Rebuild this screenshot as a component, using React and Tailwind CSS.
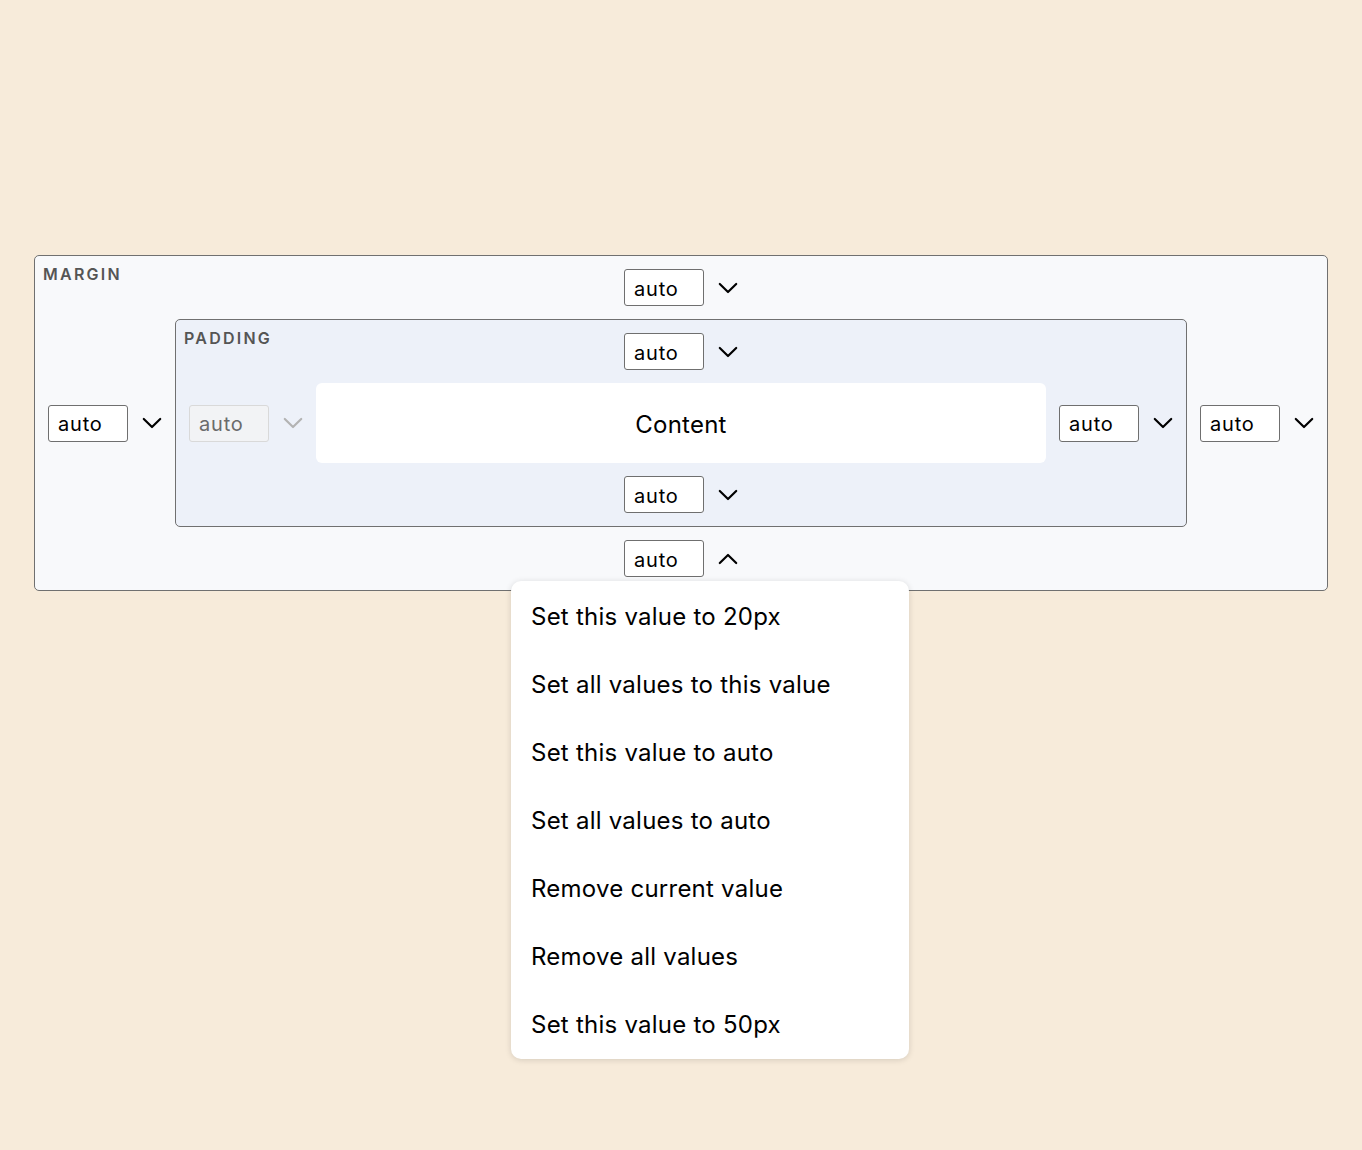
import React from 'react';

const menuItems = [
  'Set this value to 20px',
  'Set all values to this value',
  'Set this value to auto',
  'Set all values to auto',
  'Remove current value',
  'Remove all values',
  'Set this value to 50px',
];

function Chevron({ up = false, muted = false }) {
  return (
    <svg
      width="20"
      height="12"
      viewBox="0 0 20 12"
      className={`ml-[14px] shrink-0 ${muted ? 'text-[#b3b3b3]' : 'text-black'}`}
      style={up ? { transform: 'rotate(180deg)' } : undefined}
    >
      <path d="M1.8 2 L10 10 L18.2 2" fill="none" stroke="currentColor" strokeWidth="2.2" strokeLinecap="round" strokeLinejoin="round" />
    </svg>
  );
}

function ValueControl({ disabled = false, open = false, children }) {
  return (
    <div className="relative flex items-center shrink-0">
      <div
        className={`w-[80px] h-[37px] rounded-[3px] border px-[9px] pt-[2px] flex items-center text-[20px] leading-none tracking-[0.04em] ${
          disabled ? 'bg-[#f2f3f5] border-[#d9d9d9] text-[#6b6b6b]' : 'bg-white border-[#6f6f6f] text-black'
        }`}
      >
        auto
      </div>
      <Chevron up={open} muted={disabled} />
      {children}
    </div>
  );
}

function BoxLabel({ children }) {
  return (
    <div className="absolute top-[10px] left-[8px] text-[16px] leading-none font-semibold tracking-[0.14em] text-[#555555]">
      {children}
    </div>
  );
}

export default function App() {
  return (
    <div
      className="min-h-[1150px] bg-[#f7ebda] px-[34px] pt-[255px]"
      style={{ fontFamily: 'Inter, "Noto Sans", sans-serif' }}
    >
      <div className="relative rounded-[5px] border border-[#707070] bg-[#f8f9fb] p-[13px] flex flex-col items-center gap-[13px]">
        <BoxLabel>MARGIN</BoxLabel>
        <ValueControl />

        <div className="w-full flex items-center gap-[13px]">
          <ValueControl />
          <div className="relative flex-1 rounded-[5px] border border-[#707070] bg-[#edf1f9] p-[13px] flex flex-col items-center gap-[13px]">
            <BoxLabel>PADDING</BoxLabel>
            <ValueControl />
            <div className="w-full flex items-center gap-[13px]">
              <ValueControl disabled />
              <div className="flex-1 h-[80px] rounded-[6px] bg-white flex items-center justify-center pt-[3px] text-[24px] tracking-[0.01em] text-black">
                Content
              </div>
              <ValueControl />
            </div>
            <ValueControl />
          </div>
          <ValueControl />
        </div>

        <ValueControl open>
          <div className="absolute z-10 top-full mt-[4px] left-[-113px] w-[398px] rounded-[10px] bg-white py-[1px] shadow-[0_1px_6px_rgba(0,0,0,0.14)]">
            {menuItems.map((item) => (
              <div key={item} className="h-[68px] px-[20px] pt-[2px] flex items-center text-[24px] tracking-[0.01em] text-black whitespace-nowrap">
                {item}
              </div>
            ))}
          </div>
        </ValueControl>
      </div>
    </div>
  );
}
